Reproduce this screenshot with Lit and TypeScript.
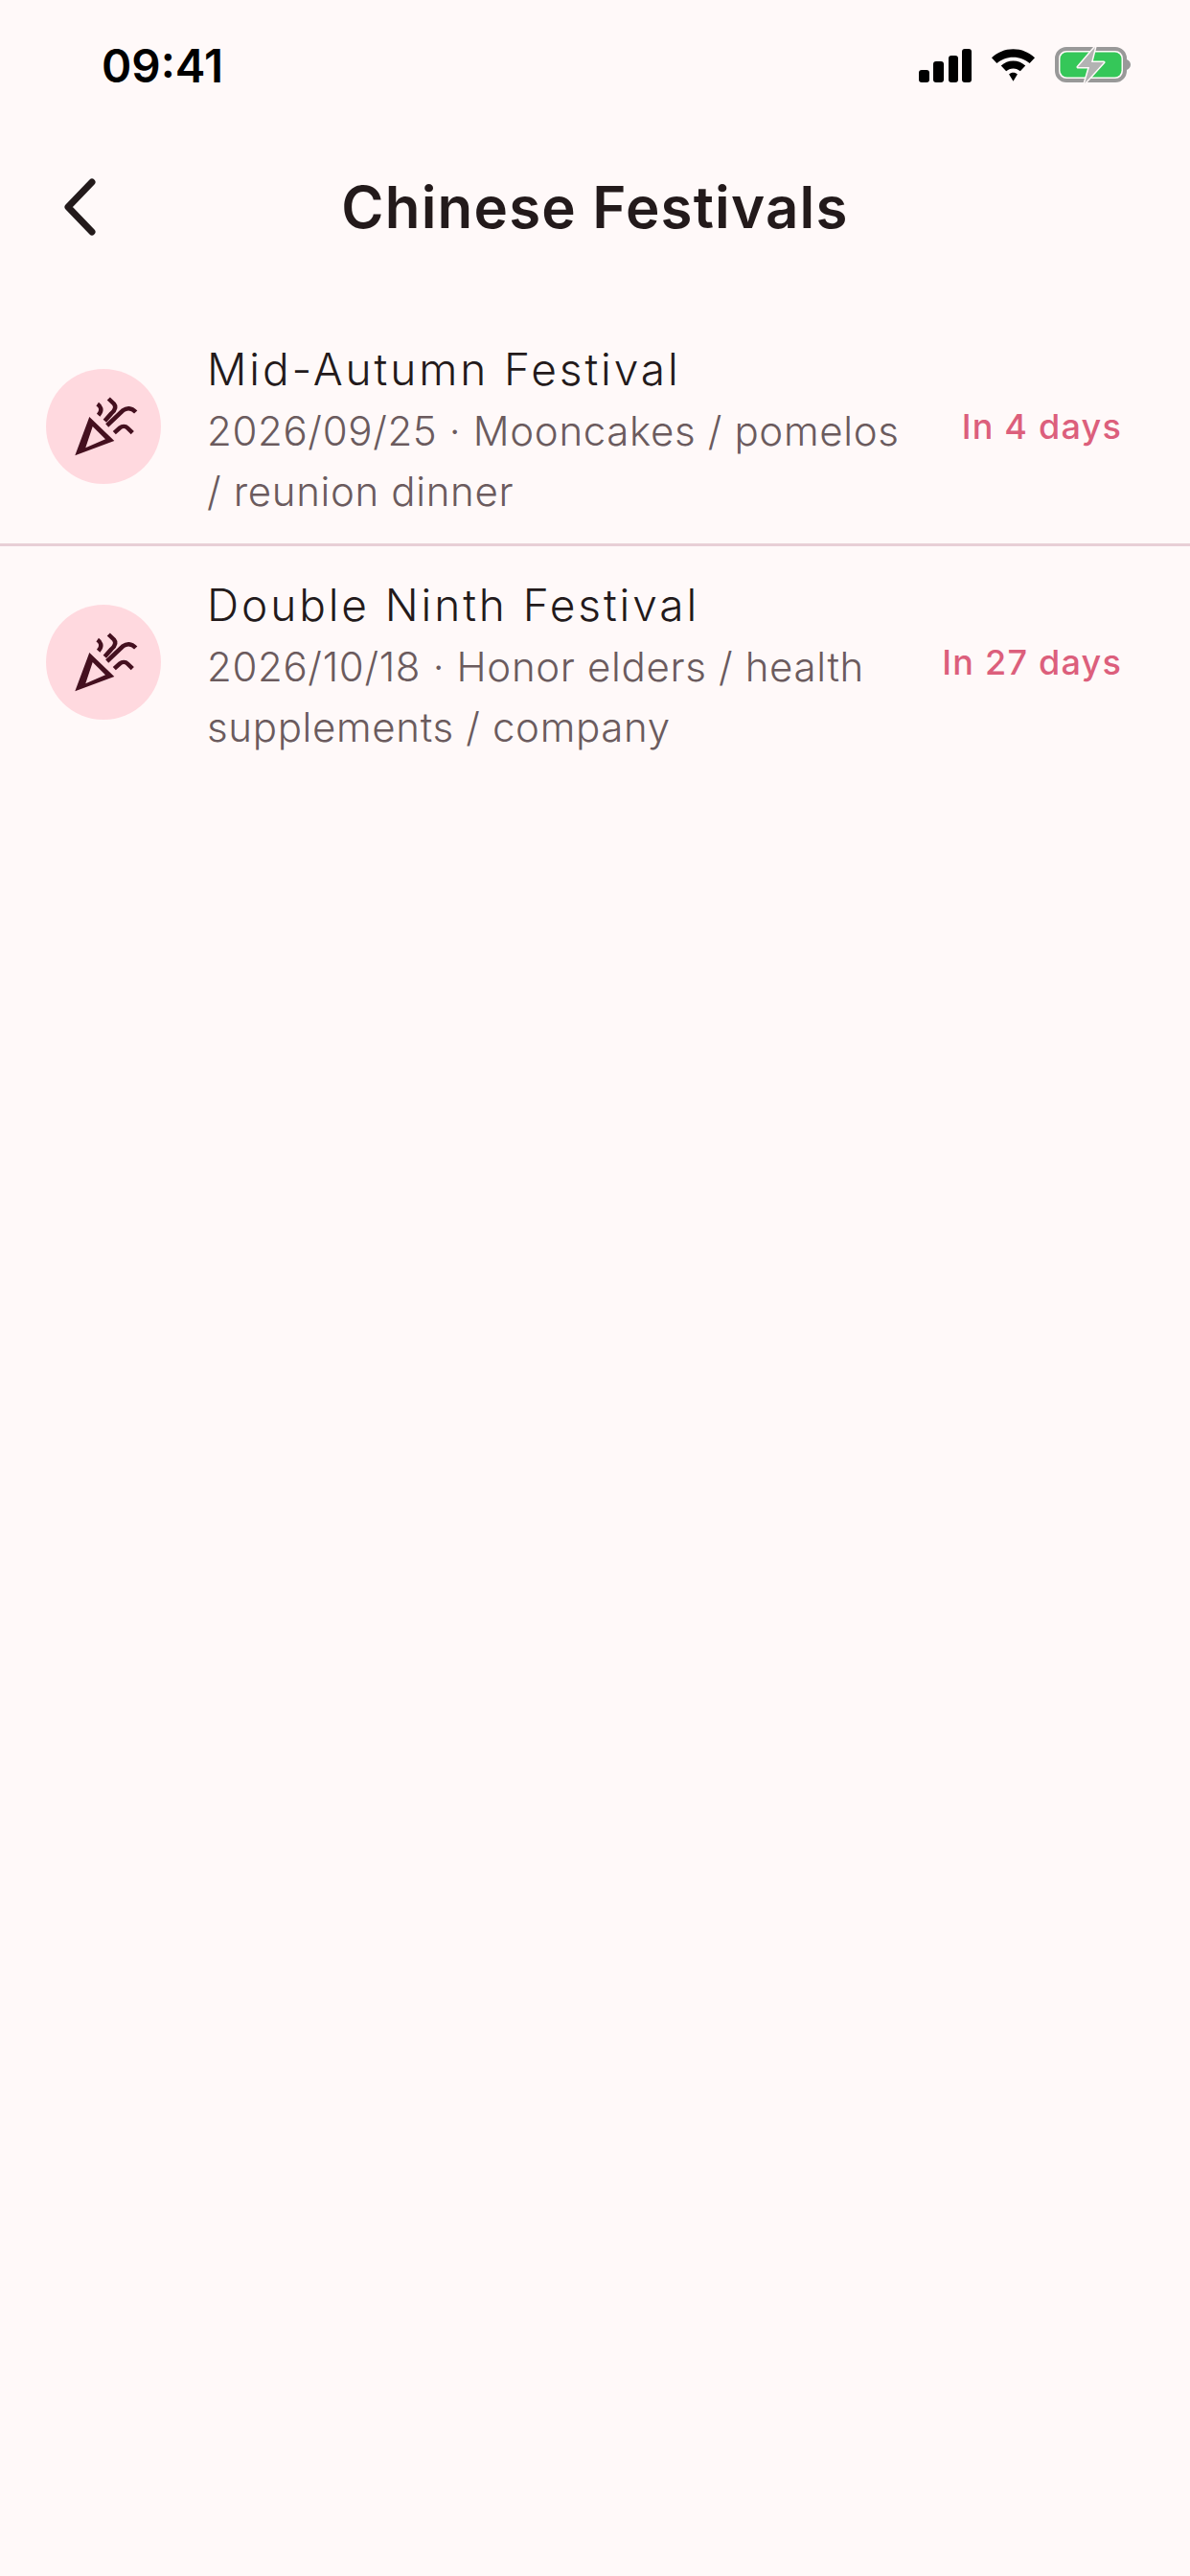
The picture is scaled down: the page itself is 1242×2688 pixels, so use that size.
import { LitElement, html, css, svg } from "lit";
import { customElement } from "lit/decorators.js";

const rows = [
  { title: "Mid-Autumn Festival", sub: "2026/09/25 · Mooncakes / pomelos / reunion dinner", when: "In 4 days" },
  { title: "Double Ninth Festival", sub: "2026/10/18 · Honor elders / health supplements / company", when: "In 27 days" },
];

const party = svg`<path d="M30.300 90.300 L45.300 50 L71.300 75 Z M41.300 82.300 L62 73.300 L48.700 60 Z" fill="#44101f" fill-rule="evenodd"/>
<g fill="none" stroke="#44101f" stroke-width="4.500">
<path d="M53.700 36.700 C57 39 59.500 42.500 54.700 48.300"/>
<path d="M65.300 31 L71 36.500 C74 40 71 44 68 46.700 L61.300 54.300"/>
<path d="M63.700 59 L80.300 43.300 C84 40.500 89 40 93.700 45"/>
<path d="M71.300 66.700 L77 61.500 C79.500 59.500 83 59.500 85 61.500 L90.300 66.700"/>
</g>`;

@customElement("app-root")
export class AppRoot extends LitElement {
  static styles = css`
    :host { display: block; width: 1242px; height: 2688px; background: #fff9f9; font-family: Inter, "Liberation Sans", sans-serif; overflow: hidden; }
    .status { height: 132px; display: flex; align-items: center; justify-content: space-between; padding: 4px 62px 0 106px; box-sizing: border-box; }
    .time { font-size: 47.5px; font-weight: 600; color: #000; }
    .sicons { display: flex; align-items: center; gap: 20px; }
    .sicons svg { display: block; }
    .appbar { height: 168px; position: relative; display: flex; align-items: center; justify-content: center; }
    .back { position: absolute; left: 48px; top: 48px; }
    h1 { margin: 0; font-size: 60px; font-weight: 600; letter-spacing: 1.2px; color: #231a1b; }
    .list { padding-top: 24px; }
    .row { display: flex; align-items: center; padding: 21px 71px 22px 48px; gap: 48px; }
    .row + .row { border-top: 3px solid #e8cfd6; }
    .circle { width: 120px; height: 120px; border-radius: 50%; background: #ffd9df; flex: none; }
    .circle svg { display: block; }
    .body { flex: 1; min-width: 0; padding: 7px 0 1px; }
    .title { font-size: 46px; line-height: 66px; font-weight: 350; letter-spacing: 2.9px; color: #231a1b; }
    .sub { font-size: 42px; line-height: 63px; font-weight: 350; letter-spacing: 0.65px; color: #6b5b5e; }
    .when { font-size: 36px; font-weight: 530; letter-spacing: 1.2px; color: #dc5f7c; flex: none; }
  `;

  render() {
    return html`
      <div class="status">
        <span class="time">09:41</span>
        <div class="sicons">
          <svg width="55" height="36" viewBox="0 0 55 36"><rect x="0" y="23" width="11" height="13" rx="3"/><rect x="15" y="14" width="11" height="22" rx="3"/><rect x="31" y="8" width="10" height="28" rx="3"/><rect x="45" y="1" width="10" height="35" rx="3"/></svg>
          <svg width="47" height="36" viewBox="0 0 48 36"><path d="M24 1 C33 1 41 4.500 47 10 L41.500 16 C37 12 31 9.500 24 9.500 C17 9.500 11 12 6.500 16 L1 10 C7 4.500 15 1 24 1 Z M24 13.500 C29 13.500 33.500 15.500 37 18.500 L31.500 24.500 C29.500 22.500 27 21.500 24 21.500 C21 21.500 18.500 22.500 16.500 24.500 L11 18.500 C14.500 15.500 19 13.500 24 13.500 Z M24 26 C25.800 26 27.300 26.700 28.500 27.800 L24 35 L19.500 27.800 C20.700 26.700 22.200 26 24 26 Z"/></svg>
          <svg width="79" height="40" viewBox="0 0 79 40">
            <rect x="2" y="3" width="71" height="33" rx="10" fill="none" stroke="#999" stroke-width="4"/>
            <rect x="5.500" y="6.500" width="64" height="26" rx="7" fill="#35c759"/>
            <path d="M75 14 C77.500 15 79 17 79 19.500 C79 22 77.500 24 75 25 Z" fill="#999"/>
            <path d="M42 1 L24 22 H36 L31 39 L51 17 H38 Z" fill="#b3b3b3" stroke="#fff9f9" stroke-width="3" stroke-linejoin="round" paint-order="stroke"/>
          </svg>
        </div>
      </div>
      <div class="appbar">
        <svg class="back" width="72" height="72" viewBox="0 0 72 72"><path d="M48 10 L23 36 L48 62" fill="none" stroke="#231a1b" stroke-width="7" stroke-linecap="round" stroke-linejoin="round"/></svg>
        <h1>Chinese Festivals</h1>
      </div>
      <div class="list">
        ${rows.map(r => html`
          <div class="row">
            <div class="circle"><svg width="120" height="120" viewBox="0 0 120 120">${party}</svg></div>
            <div class="body">
              <div class="title">${r.title}</div>
              <div class="sub">${r.sub}</div>
            </div>
            <div class="when">${r.when}</div>
          </div>`)}
      </div>
    `;
  }
}
